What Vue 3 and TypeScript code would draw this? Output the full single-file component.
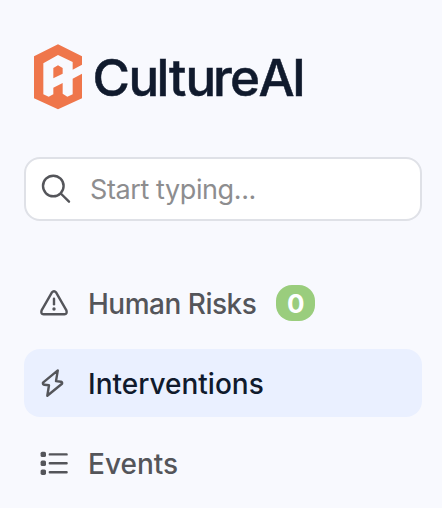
<script setup lang="ts">
import { ref } from 'vue'

interface NavItem {
  label: string
  icon: 'warning' | 'bolt' | 'list'
  badge?: number
}

const items: NavItem[] = [
  { label: 'Human Risks', icon: 'warning', badge: 0 },
  { label: 'Interventions', icon: 'bolt' },
  { label: 'Events', icon: 'list' },
]
const active = ref('Interventions')
const query = ref('')
</script>

<template>
  <aside class="sidebar">
    <header class="brand">
      <svg class="mark" width="48" height="66" viewBox="42 26 144 198">
        <path fill="#ef764b" fill-rule="evenodd" d="M114 27L186 63V88L158 103V80L114 59L70 84V177L86 184L100 177V157L128 143V175L142 184L158 177V130L186 115V189L114 222L42 189V63ZM100 98L114 90L128 98V115L100 129Z" />
      </svg>
      <svg class="wordmark" width="220" height="70" viewBox="0 0 220 70">
        <text x="-1.5 34.5 62.5 75 91.5 119 136 164.5 198" y="52">CultureAI</text>
      </svg>
    </header>

    <label class="search">
      <svg width="30" height="30" viewBox="0 0 30 30" class="line">
        <circle cx="12.3" cy="12" r="10.3" />
        <path d="M19.8 19.5L28 27.7" />
      </svg>
      <input v-model="query" type="text" placeholder="Start typing..." />
    </label>

    <nav class="nav">
      <a v-for="item in items" :key="item.label" class="item" :class="[item.icon, { active: active === item.label }]" @click="active = item.label">
        <svg v-if="item.icon === 'warning'" class="line" width="30" height="30" viewBox="0 0 30 30">
          <path d="M12.8 4.6Q15 1.9 17.2 4.6L27.4 22.4Q28.5 26.1 25.4 26.3H4.6Q1.5 26.1 2.6 22.4Z" />
          <path d="M15 10.8V16.3" /><circle class="dot" cx="15" cy="21" r="1.7" />
        </svg>
        <svg v-else-if="item.icon === 'bolt'" class="line" width="30" height="30" viewBox="0 0 30 30">
          <path d="M18.8 2.4L4 14.6Q3.6 16.4 5.3 16.8L10 17.3L8.3 27.8L23 15.8Q23.6 14.2 22 13.7L17 13.1Z" />
        </svg>
        <svg v-else class="line" width="30" height="30" viewBox="0 0 30 30">
          <g class="dot"><rect x="1.6" y="3.7" width="5.4" height="5.4" rx="1.6" /><rect x="1.6" y="12.6" width="5.4" height="5.4" rx="1.6" /><rect x="1.6" y="21.5" width="5.4" height="5.4" rx="1.6" /></g>
          <path d="M10.8 6.4H27.6M10.8 15.3H27.6M10.8 24.2H27.6" />
        </svg>
        <span class="label">{{ item.label }}</span>
        <span v-if="item.badge !== undefined" class="badge">{{ item.badge }}</span>
      </a>
    </nav>
  </aside>
</template>

<style>
body {
  background: #f8f9fe;
}
</style>

<style scoped>
.sidebar {
  box-sizing: border-box;
  width: 442px;
  height: 508px;
  padding: 44px 20px 0 24px;
  overflow: hidden;
  background: #f8f9fe;
  font-family: Inter, "Liberation Sans", sans-serif;
}
.brand {
  display: flex;
  height: 66px;
  padding-left: 10px;
  gap: 12px;
}
.wordmark {
  flex: none;
  overflow: visible;
}
.wordmark text {
  font-size: 51px;
  font-weight: 500;
  fill: #101a2d;
  stroke: #101a2d;
  stroke-width: 0.5px;
}
.line {
  flex: none;
  fill: none;
  stroke: #54555a;
  stroke-width: 2.4;
  stroke-linecap: round;
  stroke-linejoin: round;
}
.dot {
  fill: #54555a;
  stroke: none;
}
.search {
  box-sizing: border-box;
  display: flex;
  align-items: center;
  height: 64px;
  margin-top: 47px;
  padding: 0 15px;
  gap: 19px;
  border: 2px solid #dfe1e7;
  border-radius: 16px;
  background: #fff;
}
.search input {
  min-width: 0;
  flex: 1;
  padding: 2px 0 0;
  border: 0;
  outline: 0;
  background: transparent;
  font: 400 27px/34px Inter, "Liberation Sans", sans-serif;
  letter-spacing: -0.4px;
}
.search input::placeholder {
  color: #8d8d8f;
  opacity: 1;
}
.nav {
  display: flex;
  flex-direction: column;
  margin-top: 48px;
  gap: 12px;
}
.item {
  display: flex;
  align-items: center;
  height: 68px;
  padding: 0 15px;
  border-radius: 16px;
  color: #54555a;
  cursor: pointer;
}
.item.active {
  background: #eaf0ff;
  color: #101a2d;
}
.label {
  margin-left: 19px;
  padding-top: 2px;
  font-size: 28px;
  font-weight: 500;
}
.warning .label {
  letter-spacing: -0.5px;
}
.badge {
  display: flex;
  align-items: center;
  justify-content: center;
  width: 39px;
  height: 36px;
  margin-left: 20px;
  border-radius: 16px;
  background: #9acd7d;
  color: #fff;
  font-size: 26px;
  font-weight: 700;
}
</style>
